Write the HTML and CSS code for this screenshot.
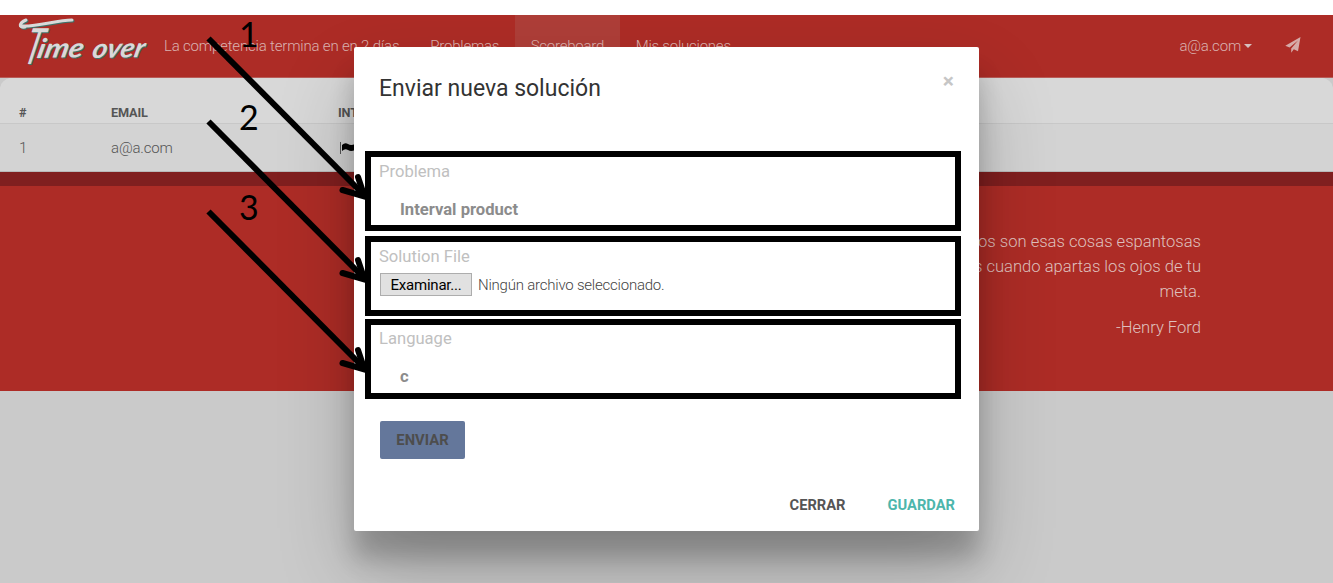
FILE: index.html
```html
<!DOCTYPE html>
<html lang="es">
<head>
<meta charset="utf-8">
<title>Time over</title>
<link rel="stylesheet" href="styles.css">
</head>
<body>
<div class="page">
  <nav class="navbar">
    <svg class="logo" width="132" height="62" viewBox="0 0 132 62" role="img" aria-label="Time over">
      <defs>
        <g id="wordmark">
          <path d="M7 12C0 13 1 8 8 5M3 11C20 12 38 5 54 5"/>
          <text class="initial" transform="translate(4 49) skewX(-14)" textLength="17" lengthAdjust="spacingAndGlyphs">T</text>
          <text transform="translate(18 43) rotate(-1) skewX(-14)" textLength="46" lengthAdjust="spacingAndGlyphs">ime</text>
          <text transform="translate(73 43) rotate(-1) skewX(-14)" textLength="52" lengthAdjust="spacingAndGlyphs">over</text>
        </g>
      </defs>
      <use class="logo-shade" href="#wordmark" x="1" y="1"/>
      <use class="logo-face" href="#wordmark"/>
    </svg>
    <span class="nav-note">La competencia termina en en 2 días</span>
    <a class="nav-link">Problemas</a>
    <a class="nav-link active">Scoreboard</a>
    <a class="nav-link">Mis soluciones</a>
    <span class="nav-user">a@a.com<i class="caret"></i></span>
    <svg class="plane" width="16" height="16" viewBox="0 0 16 16"><path d="M15.500 0L13 14.300 8.800 12.300 6.200 15.700V11.500L13 3.500 4.600 10.600 0.300 8.800Z"/></svg>
  </nav>
  <main class="board-wrap">
    <div class="board">
      <div class="row head"><span>#</span><span>EMAIL</span><span>INTERVAL</span></div>
      <div class="row"><span>1</span><span>a@a.com</span>
        <svg class="flag" width="18" height="14" viewBox="0 0 18 14"><path class="pole" d="M2.500 1V13"/><path d="M4 4Q7 1 10 3T17 3V9Q13 11 10 9T4 10Z"/></svg>
      </div>
    </div>
  </main>
  <section class="quote">
    <p>Los obstáculos son esas cosas espantosas<br>que ves cuando apartas los ojos de tu<br>meta.</p>
    <p>-Henry Ford</p>
  </section>
  <div class="modal">
    <header class="modal-head"><h4>Enviar nueva solución</h4><span class="close">×</span></header>
    <div class="field problem"><label>Problema</label><b>Interval product</b></div>
    <div class="field upload"><label>Solution File</label>
      <div class="file"><span class="browse">Examinar...</span><span>Ningún archivo seleccionado.</span></div>
    </div>
    <div class="field language"><label>Language</label><b>c</b></div>
    <span class="submit">ENVIAR</span>
    <footer class="modal-foot"><span>CERRAR</span><span class="save">GUARDAR</span></footer>
  </div>
</div>
<svg class="notes" width="1333" height="583" viewBox="0 0 1333 583">
  <defs>
    <g id="arrow"><path d="M0 0L156 157"/><path class="tip" d="M149.500 138.500L156 158L134 151.500"/></g>
  </defs>
  <g class="ink">
    <rect x="368" y="154" width="590" height="74"/>
    <rect x="368" y="239" width="590" height="74"/>
    <rect x="368" y="322" width="590" height="74"/>
    <use href="#arrow" x="208.500" y="38.500"/>
    <use href="#arrow" x="208.500" y="121.500"/>
    <use href="#arrow" x="208.500" y="211.500"/>
  </g>
  <text x="239" y="47">1</text>
  <text x="239" y="130">2</text>
  <text x="239" y="220">3</text>
</svg>
</body>
</html>
```
FILE: styles.css
```css
* { box-sizing: border-box; }
body { margin: 0; width: 1333px; height: 583px; overflow: hidden; background: #fff; font: 300 16px/25px Roboto, sans-serif; color: #555; }
.page { position: relative; margin-top: 15px; height: 568px; background: #cacaca; overflow: hidden; }
.navbar { display: flex; align-items: center; height: 63px; padding-left: 18px; background: #ad2c26; border-bottom: 1px solid #b95c58; color: #dab2b0; font-size: 15px; letter-spacing: -0.18px; }
.logo { flex: none; letter-spacing: 0; }
.logo text { font: italic 700 27px Lato, sans-serif; }
.logo .initial { font-size: 50px; font-weight: 400; }
.logo path { fill: none; stroke-width: 3; stroke-linecap: round; }
.logo-shade { fill: #3e7269; stroke: #3e7269; stroke-width: 0; }
.logo-face { fill: #d9d9d9; stroke: #d9d9d9; stroke-width: 0; }
.nav-note { margin: 0 15px 0 14px; white-space: nowrap; }
.nav-link { padding: 0 15.5px 0 16px; height: 62px; line-height: 62px; white-space: nowrap; letter-spacing: -0.23px; }
.nav-link.active { background: #ae3e38; }
.nav-user { display: flex; align-items: center; margin-left: auto; }
.caret { border: 4px solid transparent; border-top-color: #d6c0be; border-bottom: 0; margin-left: 3px; }
.plane { fill: #d6aaa8; margin: 0 32px 3px 33px; }
.board { height: 94px; background: #d8d8d8; border-radius: 12px 12px 0 0; overflow: hidden; border-bottom: 1px solid #b9b9b9; }
.row { display: grid; grid-template-columns: 92px 227px 1fr; align-items: center; height: 47px; padding: 1px 0 0 19px; background: #d3d3d3; font-size: 15px; letter-spacing: -0.15px; }
.row.head { height: 46px; padding-top: 22px; background: #d8d8d8; border-bottom: 1px solid #c8c8c8; font-size: 12.7px; font-weight: 700; }
.flag { fill: #000; }
.pole { stroke: #555; }
.quote { height: 219px; padding: 43px 132px 0 0; background: #ad2c26; border-top: 14px solid #801f1f; color: #dfc0be; text-align: right; font-size: 16.6px; }
.quote p { margin: 0 0 11px; }
.modal { position: absolute; left: 354px; top: 32px; width: 625px; height: 484px; display: flex; flex-direction: column; padding: 0 24px 0 25px; border-radius: 2px; background: #fff; box-shadow: 0 27px 24px 0 rgba(0,0,0,.2), 0 40px 77px 0 rgba(0,0,0,.22); }
.modal-head { display: flex; justify-content: space-between; height: 112px; padding-top: 24px; }
.modal-head h4 { margin: 0; font-size: 23px; line-height: 36px; font-weight: 400; color: #333; }
.close { margin-right: 1px; font-size: 21px; line-height: 21px; font-weight: 700; color: #c6c6c6; }
.field { display: flex; flex-direction: column; height: 85px; }
.field label { font-weight: 400; font-size: 16.6px; color: #c0c0c0; }
.field b { margin: 13px 0 0 21px; color: #8c8c8c; font-size: 16.6px; font-weight: 700; }
.field.upload { height: 82px; }
.file { display: flex; gap: 6px; margin-top: 4px; font-size: 15px; line-height: 25px; letter-spacing: -0.22px; color: #444; }
.browse { width: 92px; height: 23px; margin-left: 1px; line-height: 22px; text-align: center; font-weight: 400; background: #e1e1e1; border: 1px solid #adadad; color: #000; }
.language { height: 95px; }
.submit { width: 85px; height: 38px; margin-left: 1px; border-radius: 2px; background: #64779b; color: #4d4d4d; font-size: 14.8px; font-weight: 700; line-height: 38px; text-align: center; }
.modal-foot { display: flex; justify-content: flex-end; gap: 42px; margin-top: 34px; font-size: 14.7px; font-weight: 700; }
.save { color: #4db6ac; }
.notes { position: absolute; left: 0; top: 0; }
.notes text { font: 400 34px Lato, sans-serif; fill: #000; }
.ink { fill: none; stroke: #000; stroke-width: 6; }
.tip { stroke-linecap: round; }
```
